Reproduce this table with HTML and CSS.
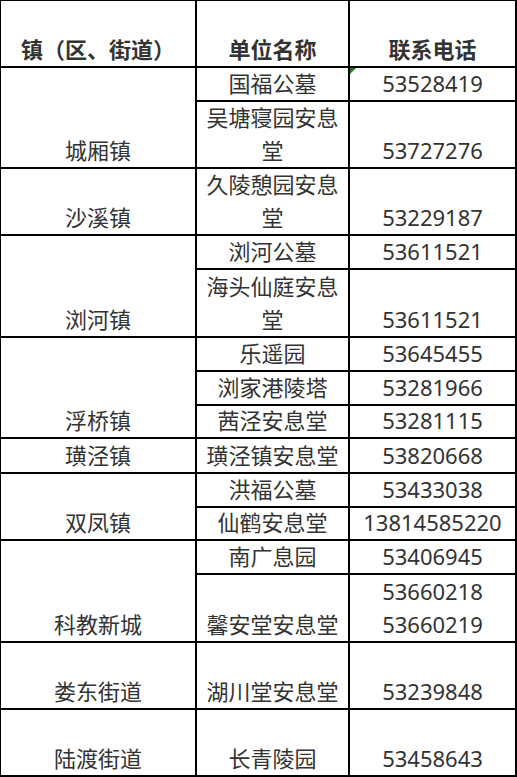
FILE: index.html
```html
<!DOCTYPE html>
<html lang="zh-CN">
<head>
<meta charset="utf-8">
<title>公墓安息堂联系电话</title>
<link rel="stylesheet" href="styles.css">
</head>
<body>
<div class="sheet">
  <div class="cell c1 s2 head">镇（区、街道）</div>
  <div class="cell c2 s2 head">单位名称</div>
  <div class="cell c3 s2 head">联系电话</div>

  <div class="cell c1 s3">城厢镇</div>
  <div class="cell c2">国福公墓</div>
  <div class="cell c3 flag">53528419</div>
  <div class="cell c2 s2">吴塘寝园安息堂</div>
  <div class="cell c3 s2">53727276</div>

  <div class="cell c1 s2">沙溪镇</div>
  <div class="cell c2 s2">久陵憩园安息堂</div>
  <div class="cell c3 s2">53229187</div>

  <div class="cell c1 s3">浏河镇</div>
  <div class="cell c2">浏河公墓</div>
  <div class="cell c3">53611521</div>
  <div class="cell c2 s2">海头仙庭安息堂</div>
  <div class="cell c3 s2">53611521</div>

  <div class="cell c1 s3">浮桥镇</div>
  <div class="cell c2">乐遥园</div>
  <div class="cell c3">53645455</div>
  <div class="cell c2">浏家港陵塔</div>
  <div class="cell c3">53281966</div>
  <div class="cell c2">茜泾安息堂</div>
  <div class="cell c3">53281115</div>

  <div class="cell c1">璜泾镇</div>
  <div class="cell c2">璜泾镇安息堂</div>
  <div class="cell c3">53820668</div>

  <div class="cell c1 s2">双凤镇</div>
  <div class="cell c2">洪福公墓</div>
  <div class="cell c3">53433038</div>
  <div class="cell c2">仙鹤安息堂</div>
  <div class="cell c3">13814585220</div>

  <div class="cell c1 s3">科教新城</div>
  <div class="cell c2">南广息园</div>
  <div class="cell c3">53406945</div>
  <div class="cell c2 s2">馨安堂安息堂</div>
  <div class="cell c3 s2"><span class="ln">53660218</span><span class="ln">53660219</span></div>

  <div class="cell c1 s2">娄东街道</div>
  <div class="cell c2 s2">湖川堂安息堂</div>
  <div class="cell c3 s2">53239848</div>

  <div class="cell c1 s2">陆渡街道</div>
  <div class="cell c2 s2">长青陵园</div>
  <div class="cell c3 s2">53458643</div>
</div>
</body>
</html>
```

FILE: styles.css
```css
html, body {
  margin: 0;
  padding: 0;
  background: #ffffff;
}

.sheet {
  width: 517px;
  box-sizing: border-box;
  border-top: 1px solid #000;
  border-left: 1px solid #000;
  display: grid;
  grid-template-columns: 196px 153px 167px;
  grid-template-rows: 34px 33px 34px 34px 33px 34px 33px 34px 34px 34px 34px 34px 33px 35px 34px 33px 34px 34px 34px 34px 33px 34px 33px;
  font-family: "Noto Sans", "Noto Sans CJK SC", sans-serif;
  font-size: 22px;
  line-height: 33px;
  color: #333333;
}

.cell {
  box-sizing: border-box;
  border-right: 2px solid #000;
  border-bottom: 2px solid #000;
  display: flex;
  flex-direction: column;
  justify-content: flex-end;
  align-items: center;
  text-align: center;
  position: relative;
  min-height: 0;
  min-width: 0;
}

.c1 { grid-column: 1; }
.c2 { grid-column: 2; }
.c3 { grid-column: 3; }

.s2 { grid-row: span 2; }
.s3 { grid-row: span 3; }

.head {
  font-weight: 700;
}

.ln {
  display: block;
}

.flag::before {
  content: "";
  position: absolute;
  left: 0;
  top: 0;
  width: 0;
  height: 0;
  border-top: 6px solid #1f7a1f;
  border-right: 6px solid transparent;
}
```
